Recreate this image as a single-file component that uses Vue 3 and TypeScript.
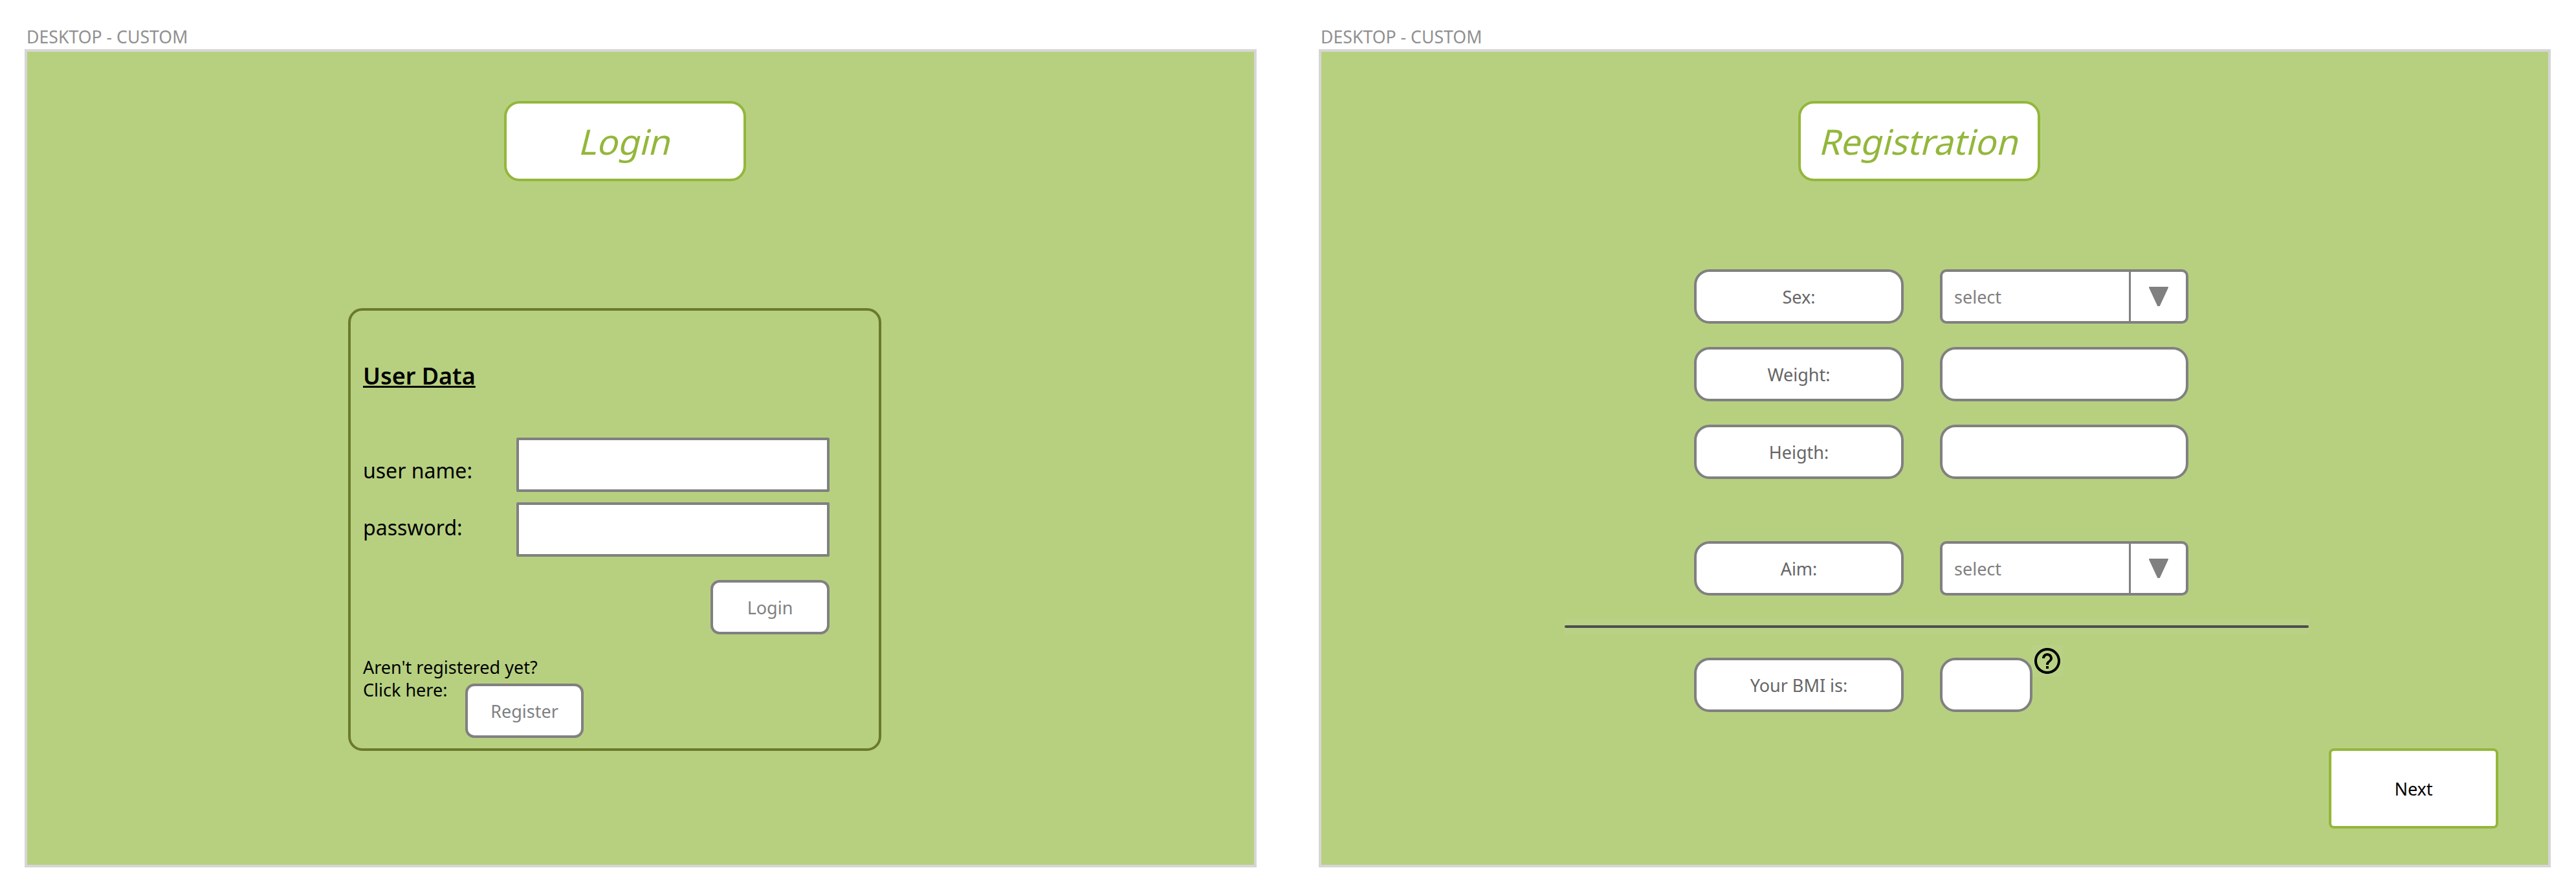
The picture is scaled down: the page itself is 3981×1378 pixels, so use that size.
<template>
  <div class="page">
    <section class="artboard">
      <div class="artboard-name">DESKTOP - CUSTOM</div>
      <div class="frame">
        <div class="title"><span class="title-text">Login</span></div>
        <div class="panel">
          <h2 class="panel-heading">User Data</h2>
          <div class="field field-user">
            <label class="field-label">user name:</label>
            <input class="field-input" type="text" />
          </div>
          <div class="field field-pass">
            <label class="field-label">password:</label>
            <input class="field-input" type="password" />
          </div>
          <div class="login-row">
            <button class="btn">Login</button>
          </div>
          <div class="register">
            <p class="register-text">Aren't registered yet?</p>
            <div class="register-row">
              <span class="register-text">Click here:</span>
              <button class="btn">Register</button>
            </div>
          </div>
        </div>
      </div>
    </section>

    <section class="artboard">
      <div class="artboard-name">DESKTOP - CUSTOM</div>
      <div class="frame">
        <div class="title"><span class="title-text">Registration</span></div>
        <div class="form">
          <template v-for="row in rows" :key="row.label">
            <div class="pill" :class="{ 'after-gap': row.label === 'Aim:' }">{{ row.label }}</div>
            <div v-if="row.select" class="select" :class="{ 'after-gap': row.label === 'Aim:' }">
              <span class="select-value">select</span>
              <span class="select-arrow">
                <svg width="32" height="30" viewBox="0 0 32 30">
                  <path d="M2 1h28l-13 28h-2z" fill="#808080" stroke="#808080" stroke-width="2" stroke-linejoin="round" />
                </svg>
              </span>
            </div>
            <div v-else class="pill"></div>
          </template>
        </div>
        <div class="divider"><div class="divider-line"></div></div>
        <div class="form bmi">
          <div class="pill">Your BMI is:</div>
          <div class="bmi-value">
            <div class="pill"></div>
            <svg class="help" width="48" height="48" viewBox="0 0 24 24">
              <path d="M11 18h2v-2h-2v2zm1-16C6.48 2 2 6.48 2 12s4.48 10 10 10 10-4.48 10-10S17.52 2 12 2zm0 18c-4.41 0-8-3.59-8-8s3.59-8 8-8 8 3.59 8 8-3.59 8-8 8zm0-14c-2.21 0-4 1.79-4 4h2c0-1.1.9-2 2-2s2 .9 2 2c0 2-3 1.75-3 5h2c0-2.25 3-2.5 3-5 0-2.21-1.79-4-4-4z" fill="#000" />
            </svg>
          </div>
        </div>
        <button class="next">Next</button>
      </div>
    </section>
  </div>
</template>

<script setup lang="ts">
interface Row {
  label: string;
  select: boolean;
}

const rows: Row[] = [
  { label: 'Sex:', select: true },
  { label: 'Weight:', select: false },
  { label: 'Heigth:', select: false },
  { label: 'Aim:', select: true },
];
</script>

<style>
html,
body {
  background: #fff;
}
</style>

<style scoped>
.page {
  display: flex;
  gap: 96px;
  padding: 0 38px;
  width: 3981px;
  height: 1378px;
  box-sizing: border-box;
  font-family: "Noto Sans", "Open Sans", sans-serif;
  overflow: hidden;
}

.artboard {
  width: 1904px;
  flex: none;
}

.artboard-name {
  height: 76px;
  box-sizing: border-box;
  padding: 40px 0 0 3px;
  font-size: 26.67px;
  line-height: 34px;
  color: #909090;
}

.frame {
  width: 1904px;
  height: 1264px;
  box-sizing: border-box;
  border: 4px solid #d6d6d6;
  background: #b7d080;
  padding-top: 76px;
}

.title {
  width: 374px;
  height: 124px;
  margin-left: 737px;
  box-sizing: border-box;
  display: flex;
  align-items: center;
  justify-content: center;
  border: 4px solid #93b73b;
  border-radius: 24px;
  background: #fff;
  color: #93b73b;
}

.title-text {
  display: inline-block;
  font-size: 54px;
  transform: translateX(3px) skewX(-14deg);
}

.panel {
  width: 824px;
  height: 684px;
  margin: 196px 0 0 496px;
  box-sizing: border-box;
  border: 4px solid #6a7a2c;
  border-radius: 22px;
  padding: 76px 76px 0 19px;
}

.panel-heading {
  margin: 0;
  height: 50px;
  font-size: 36px;
  line-height: 50px;
  font-weight: 600;
  color: #000;
  text-decoration: underline;
}

.field {
  display: flex;
  height: 84px;
}

.field-user {
  margin-top: 70px;
}

.field-pass {
  margin-top: 16px;
}

.field-label {
  width: 237px;
  flex: none;
  font-size: 32px;
  line-height: 44px;
  color: #000;
}

.field-user .field-label {
  padding-top: 29px;
}

.field-pass .field-label {
  padding-top: 17px;
}

.field-input {
  width: 484px;
  height: 84px;
  box-sizing: border-box;
  border: 4px solid #808080;
  border-radius: 2px;
  background: #fff;
  outline: none;
  padding: 0;
}

.login-row {
  display: flex;
  justify-content: flex-end;
  margin-top: 36px;
}

.login-row .btn {
  width: 184px;
}

.btn {
  width: 183px;
  height: 84px;
  box-sizing: border-box;
  border: 4px solid #808080;
  border-radius: 14px;
  background: #fff;
  color: #808080;
  font-family: inherit;
  font-size: 27px;
  padding: 0;
}

.register {
  margin-top: 31px;
}

.register-text {
  margin: 0;
  font-size: 27px;
  line-height: 40px;
  color: #000;
  white-space: nowrap;
}

.register-row {
  display: flex;
  margin-top: -5px;
  gap: 29px;
}

.register-row .register-text {
  width: 129px;
  flex: none;
}

.register-row .btn {
  margin-top: 10px;
}

.form {
  display: grid;
  grid-template-columns: 324px 384px;
  grid-template-rows: 84px 84px 84px 144px;
  column-gap: 56px;
  row-gap: 36px;
  margin: 136px 0 0 576px;
}

.pill {
  box-sizing: border-box;
  display: flex;
  align-items: center;
  justify-content: center;
  border: 4px solid #808080;
  border-radius: 24px;
  background: #fff;
  color: #666;
  font-size: 27px;
}

.after-gap {
  margin-top: 60px;
}

.form.bmi {
  grid-template-rows: 84px;
  margin-top: 36px;
}

.select {
  box-sizing: border-box;
  display: flex;
  border: 4px solid #808080;
  border-radius: 10px;
  background: #fff;
}

.select-value {
  flex: 1;
  display: flex;
  align-items: center;
  padding-left: 18px;
  font-size: 27px;
  color: #808080;
}

.select-arrow {
  width: 88px;
  box-sizing: border-box;
  flex: none;
  display: flex;
  align-items: center;
  justify-content: center;
  border-left: 3px solid #808080;
}

/* the mockup tool leaves a faint lighter box round the line and the icon */
.divider {
  width: 1150px;
  height: 24px;
  margin: 36px 0 0 376px;
  display: flex;
  align-items: center;
  background: rgba(255, 255, 255, 0.04);
}

.divider-line {
  width: 100%;
  height: 4px;
  border-radius: 2px;
  background: #4d4d4d;
}

.bmi-value {
  position: relative;
  width: 143px;
}

.bmi-value .pill {
  height: 84px;
}

.help {
  position: absolute;
  left: 142px;
  top: -19px;
  background: rgba(255, 255, 255, 0.04);
}

.next {
  display: block;
  width: 262px;
  height: 124px;
  margin: 56px 0 0 1557px;
  box-sizing: border-box;
  border: 4px solid #93b73b;
  border-radius: 8px;
  background: #fff;
  color: #000;
  font-family: inherit;
  font-size: 27px;
  padding: 0;
}
</style>
